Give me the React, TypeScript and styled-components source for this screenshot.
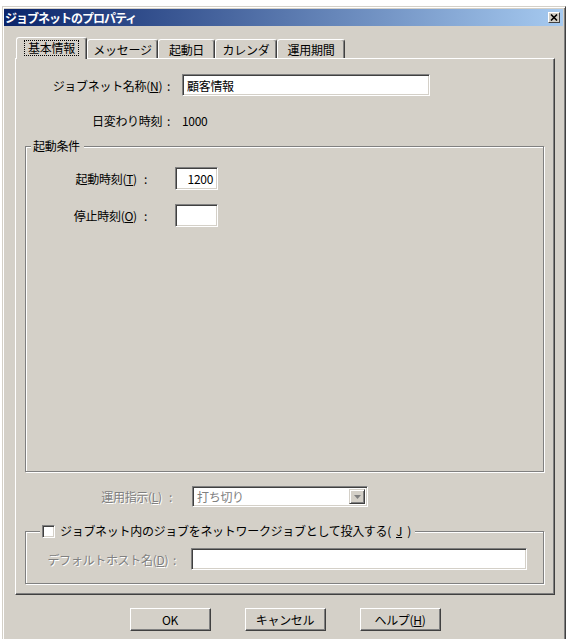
import React from 'react';
import styled, { createGlobalStyle } from 'styled-components';

const GlobalStyle = createGlobalStyle`
  html, body {
    margin: 0;
    padding: 0;
    background: #ffffff;
  }
  body {
    font-family: "Noto Sans CJK JP", "Liberation Sans", sans-serif;
    font-size: 12px;
    letter-spacing: -0.3px;
    color: #000000;
  }
  * {
    box-sizing: border-box;
  }
`;

const Page = styled.div`
  height: 639px;
  overflow: hidden;
  padding: 6px 0 0 2px;
`;

const Window = styled.div`
  width: 564px;
  height: 660px;
  background: #d4d0c8;
  border: 1px solid #d4d0c8;
  border-right-color: #404040;
  border-bottom-color: #404040;
  box-shadow: inset 1px 1px 0 #ffffff, inset -1px -1px 0 #808080;
  padding: 2px 2px 2px 1px;
  display: flex;
  flex-direction: column;
`;

const TitleBar = styled.div`
  height: 17px;
  display: flex;
  align-items: center;
  justify-content: space-between;
  padding: 0 3px 0 1px;
  background: linear-gradient(to right, #0a246a, #a6caf0);
`;

const TitleText = styled.span`
  color: #ffffff;
  font-weight: bold;
  font-size: 12px;
  letter-spacing: -1px;
  line-height: 17px;
`;

const CloseButton = styled.div`
  width: 12px;
  height: 11px;
  background: #d4d0c8;
  border: 1px solid #ffffff;
  border-right-color: #404040;
  border-bottom-color: #404040;
  display: flex;
  align-items: center;
  justify-content: center;
`;

const Body = styled.div`
  padding: 11px 0 0 11px;
  display: flex;
  flex-direction: column;
`;

const TabStrip = styled.div`
  display: flex;
  align-items: flex-end;
  height: 21px;
  padding-left: 1px;
`;

const Tab = styled.div<{ $w: number; $active?: boolean }>`
  position: relative;
  z-index: ${(p) => (p.$active ? 1 : 0)};
  width: ${(p) => p.$w}px;
  height: ${(p) => (p.$active ? 22 : 19)}px;
  margin-bottom: ${(p) => (p.$active ? -1 : 0)}px;
  background: #d4d0c8;
  border: 1px solid #ffffff;
  border-bottom: none;
  border-right-color: #404040;
  border-radius: 3px 3px 0 0;
  box-shadow: inset -1px 0 0 #808080;
  display: flex;
  align-items: ${(p) => (p.$active ? 'flex-start' : 'center')};
  padding-top: ${(p) => (p.$active ? 2 : 0)}px;
  justify-content: center;
  font-size: 12px;
  white-space: nowrap;
`;

const FocusRect = styled.span`
  border: 1px dotted #000000;
  padding: 0 3px;
  line-height: 14px;
`;

const Panel = styled.div`
  width: 540px;
  height: 537px;
  border: 1px solid #ffffff;
  border-right-color: #404040;
  border-bottom-color: #404040;
  box-shadow: inset -1px -1px 0 #808080;
  padding: 15px 0 10px 0;
  display: flex;
  flex-direction: column;
`;

const Row = styled.div<{ $h?: number; $mt?: number }>`
  display: flex;
  align-items: center;
  height: ${(p) => p.$h ?? 22}px;
  margin-top: ${(p) => p.$mt ?? 0}px;
`;

const Label = styled.span<{ $w: number; $gap: number; $disabled?: boolean }>`
  width: ${(p) => p.$w}px;
  margin-right: ${(p) => p.$gap}px;
  text-align: right;
  white-space: pre;
  color: ${(p) => (p.$disabled ? '#808080' : '#000000')};
  text-shadow: ${(p) => (p.$disabled ? '1px 1px 0 #ffffff' : 'none')};
`;

const Value = styled.span`
  white-space: nowrap;
`;

const TextBox = styled.div<{ $w: number; $h?: number; $right?: boolean }>`
  width: ${(p) => p.$w}px;
  height: ${(p) => p.$h ?? 22}px;
  background: #ffffff;
  border: 1px solid #808080;
  border-right-color: #ffffff;
  border-bottom-color: #ffffff;
  box-shadow: inset 1px 1px 0 #404040, inset -1px -1px 0 #d4d0c8;
  display: flex;
  align-items: center;
  justify-content: ${(p) => (p.$right ? 'flex-end' : 'flex-start')};
  padding: 0 4px;
  font-size: 12px;
  white-space: nowrap;
`;

const Group = styled.div<{ $h?: number; $grow?: boolean; $mt: number }>`
  position: relative;
  margin: ${(p) => p.$mt}px 0 0 9px;
  width: 519px;
  height: ${(p) => (p.$h ? `${p.$h}px` : 'auto')};
  flex: ${(p) => (p.$grow ? '1 1 auto' : '0 0 auto')};
  border: 1px solid #808080;
  box-shadow: 1px 1px 0 #ffffff, inset 1px 1px 0 #ffffff;
  display: flex;
  flex-direction: column;
`;

const Legend = styled.div<{ $left: number }>`
  position: absolute;
  top: -9px;
  left: ${(p) => p.$left}px;
  height: 16px;
  line-height: 16px;
  padding: 0 4px 0 2px;
  background: #d4d0c8;
  display: flex;
  align-items: center;
  gap: 5px;
  white-space: nowrap;
`;

const GroupBody = styled.div<{ $pt: number }>`
  padding-top: ${(p) => p.$pt}px;
  display: flex;
  flex-direction: column;
`;

const CheckBox = styled.span`
  display: inline-block;
  width: 13px;
  height: 13px;
  background: #ffffff;
  border: 1px solid #808080;
  border-right-color: #ffffff;
  border-bottom-color: #ffffff;
  box-shadow: inset 1px 1px 0 #404040, inset -1px -1px 0 #d4d0c8;
`;

const Combo = styled.div`
  width: 176px;
  height: 21px;
  background: #ffffff;
  border: 1px solid #808080;
  border-right-color: #ffffff;
  border-bottom-color: #ffffff;
  box-shadow: inset 1px 1px 0 #404040, inset -1px -1px 0 #d4d0c8;
  display: flex;
  align-items: center;
  justify-content: space-between;
  padding: 2px 2px 2px 4px;
  color: #808080;
  white-space: nowrap;
`;

const ComboArrow = styled.div`
  width: 16px;
  height: 15px;
  background: #d4d0c8;
  border: 1px solid #d4d0c8;
  border-right-color: #404040;
  border-bottom-color: #404040;
  box-shadow: inset 1px 1px 0 #ffffff, inset -1px -1px 0 #808080;
  display: flex;
  align-items: center;
  justify-content: center;
`;

const ButtonRow = styled.div`
  display: flex;
  justify-content: center;
  gap: 34px;
  margin-top: 13px;
  padding-right: 8px;
`;

const Button = styled.div`
  width: 81px;
  height: 23px;
  background: #d4d0c8;
  border: 1px solid #ffffff;
  border-right-color: #404040;
  border-bottom-color: #404040;
  box-shadow: inset -1px -1px 0 #808080;
  display: flex;
  align-items: center;
  justify-content: center;
  font-size: 12px;
  white-space: nowrap;
`;

const tabs = [
  { label: '基本情報', w: 71, active: true },
  { label: 'メッセージ', w: 71 },
  { label: '起動日', w: 57 },
  { label: 'カレンダ', w: 62 },
  { label: '運用期間', w: 68 },
];

export default function App() {
  return (
    <Page>
      <GlobalStyle />
      <Window>
        <TitleBar>
          <TitleText>ジョブネットのプロパティ</TitleText>
          <CloseButton>
            <svg width="8" height="7" viewBox="0 0 8 7">
              <path d="M1 0.5 L7 6.5 M7 0.5 L1 6.5" stroke="#000" strokeWidth="1.6" />
            </svg>
          </CloseButton>
        </TitleBar>

        <Body>
          <TabStrip>
            {tabs.map((t) => (
              <Tab key={t.label} $w={t.w} $active={t.active}>
                {t.active ? <FocusRect>{t.label}</FocusRect> : t.label}
              </Tab>
            ))}
          </TabStrip>

          <Panel>
            <Row>
              <Label $w={154} $gap={12}>
                ジョブネット名称(<u>N</u>){'  :'}
              </Label>
              <TextBox $w={248}>顧客情報</TextBox>
            </Row>
            <Row $mt={13}>
              <Label $w={154} $gap={12}>
                日変わり時刻{'  :'}
              </Label>
              <Value>1000</Value>
            </Row>

            <Group $grow $mt={15}>
              <Legend $left={5}>起動条件</Legend>
              <GroupBody $pt={20}>
                <Row $h={23}>
                  <Label $w={121} $gap={28}>
                    起動時刻(<u>T</u>){'   :'}
                  </Label>
                  <TextBox $w={43} $h={23} $right>
                    1200
                  </TextBox>
                </Row>
                <Row $h={23} $mt={14}>
                  <Label $w={121} $gap={28}>
                    停止時刻(<u>O</u>){'   :'}
                  </Label>
                  <TextBox $w={43} $h={23} />
                </Row>
              </GroupBody>
            </Group>

            <Row $h={21} $mt={14}>
              <Label $w={156} $gap={20} $disabled>
                運用指示(<u>L</u>){'   :'}
              </Label>
              <Combo>
                打ち切り
                <ComboArrow>
                  <svg width="7" height="4" viewBox="0 0 7 4">
                    <polygon points="0,0 7,0 3.5,4" fill="#808080" />
                  </svg>
                </ComboArrow>
              </Combo>
            </Row>

            <Group $mt={24} $h={53}>
              <Legend $left={14}>
                <CheckBox />
                ジョブネット内のジョブをネットワークジョブとして投入する(<u>J</u>)
              </Legend>
              <GroupBody $pt={16}>
                <Row $h={22}>
                  <Label $w={150} $gap={15} $disabled>
                    デフォルトホスト名(<u>D</u>){'  :'}
                  </Label>
                  <TextBox $w={336} />
                </Row>
              </GroupBody>
            </Group>
          </Panel>

          <ButtonRow>
            <Button>OK</Button>
            <Button>キャンセル</Button>
            <Button>
              ヘルプ(<u>H</u>)
            </Button>
          </ButtonRow>
        </Body>
      </Window>
    </Page>
  );
}
